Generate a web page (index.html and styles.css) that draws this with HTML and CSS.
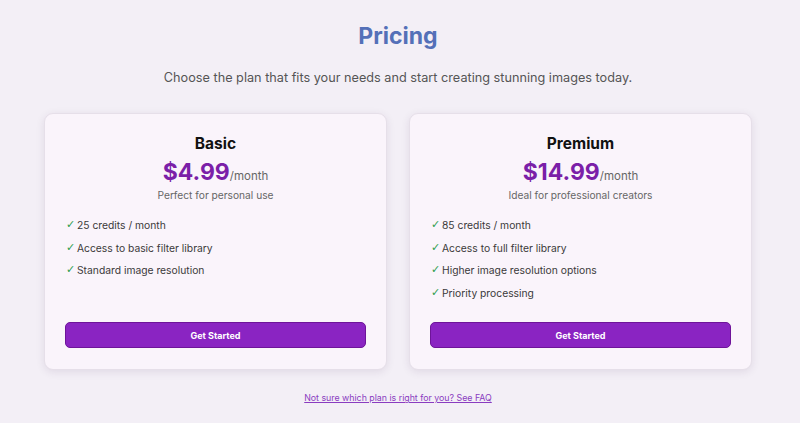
FILE: index.html
```html
<!DOCTYPE html>
<html lang="en">
<head>
  <meta charset="UTF-8">
  <meta name="viewport" content="width=device-width, initial-scale=1.0">
  <title>Pricing</title>
  <link rel="stylesheet" href="styles.css">
</head>
<body>

  <section class="pricing">
    <h1>Pricing</h1>
    <p class="intro">Choose the plan that fits your needs and start creating stunning images today.</p>

    <div class="plans">
      <!-- Basic plan -->
      <div class="plan">
        <h2>Basic</h2>
        <div class="price"><span class="amount">$4.99</span>/month</div>
        <p class="tagline">Perfect for personal use</p>
        <ul class="features">
          <li>25 credits / month</li>
          <li>Access to basic filter library</li>
          <li>Standard image resolution</li>
        </ul>
        <button class="plan-button">Get Started</button>
      </div>

      <!-- Premium plan -->
      <div class="plan">
        <h2>Premium</h2>
        <div class="price"><span class="amount">$14.99</span>/month</div>
        <p class="tagline">Ideal for professional creators</p>
        <ul class="features">
          <li>85 credits / month</li>
          <li>Access to full filter library</li>
          <li>Higher image resolution options</li>
          <li>Priority processing</li>
        </ul>
        <button class="plan-button">Get Started</button>
      </div>
    </div>

    <a class="faq-link" href="#">Not sure which plan is right for you? See FAQ</a>
  </section>

</body>
</html>
```

FILE: styles.css
```css
body {
  margin: 0;
  font-family: Inter, "Noto Sans", Arial, sans-serif;
  background-color: #f3eff6;
  color: #333;
}
.pricing {
  display: flex;
  flex-direction: column;
  align-items: center;
  padding: 20px 48px 0 44px;
}
h1 {
  margin: 0;
  font-size: 23px;
  font-weight: 700;
  color: #5470b8;
  line-height: 32px;
}
.intro {
  margin: 16px 0 0 0;
  font-size: 12.7px;
  color: #555;
  line-height: 20px;
}
.plans {
  display: flex;
  gap: 22px;
  width: 100%;
  margin-top: 25px;
}
.plan {
  flex: 1;
  display: flex;
  flex-direction: column;
  align-items: center;
  background-color: #faf4fb;
  border: 1px solid #e6dfe9;
  border-radius: 9px;
  box-shadow: 0 2px 8px rgba(60, 30, 80, 0.1);
  padding: 19px 20px 21px 20px;
}
.plan h2 {
  margin: 0;
  font-size: 15.5px;
  font-weight: 700;
  color: #111;
  line-height: 22px;
}
.price {
  margin-top: 6px;
  height: 26px;
  font-size: 11.5px;
  color: #666;
  line-height: 30px;
}
.amount {
  font-size: 23px;
  font-weight: 700;
  color: #7b1fa8;
  line-height: 1;
}
.tagline {
  margin: 0;
  font-size: 10.2px;
  color: #666;
  line-height: 16px;
}
.features {
  list-style: none;
  padding: 0;
  margin: 14px 0 21px 0;
  align-self: stretch;
}
.features li {
  display: flex;
  font-size: 10.3px;
  color: #3a3a3a;
  line-height: 16px;
  height: 16px;
  margin-bottom: 6.7px;
}
.features li:last-child {
  margin-bottom: 0;
}
.features li::before {
  content: "\2713";
  flex: none;
  width: 12px;
  padding-left: 1px;
  box-sizing: border-box;
  font-family: "DejaVu Sans", sans-serif;
  font-size: 11px;
  line-height: 16px;
  color: #2e9e4f;
}
.plan-button {
  margin-top: auto;
  align-self: stretch;
  height: 26px;
  background-color: #8a24c2;
  border: 1px solid #6e1499;
  border-radius: 5px;
  color: white;
  font-family: inherit;
  font-size: 9px;
  font-weight: 700;
  cursor: pointer;
}
.plan-button:hover {
  background-color: #7a1cad;
}
.faq-link {
  margin-top: 21px;
  font-size: 8.8px;
  color: #8a3cc0;
  line-height: 14px;
}
```
